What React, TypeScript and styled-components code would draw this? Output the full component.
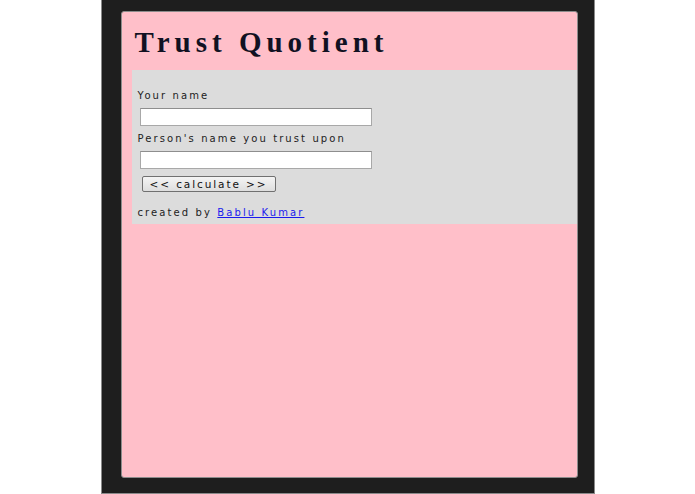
import React from 'react';
import styled, { createGlobalStyle } from 'styled-components';

const GlobalStyle = createGlobalStyle`
  html, body {
    margin: 0;
    padding: 0;
    background: #ffffff;
  }
`;

const Frame = styled.div`
  box-sizing: border-box;
  width: 494px;
  height: 494px;
  margin: 0 auto;
  padding: 11px 16px 15px 19px;
  background: #1e1e1e;
  border: 1px solid #8a8a8a;
  border-top: none;
`;

const Card = styled.div`
  box-sizing: border-box;
  height: 100%;
  background: #ffbfc9;
  border: 1px solid #8c8c8c;
  border-radius: 3px;
  padding-left: 10px;
`;

const Title = styled.h1`
  margin: 0;
  padding: 15px 0 13px 3px;
  font-family: 'Liberation Serif', 'Times New Roman', serif;
  font-weight: bold;
  font-size: 29px;
  line-height: 30px;
  letter-spacing: 5px;
  color: #111122;
`;

const FormPanel = styled.div`
  background: #dcdcdc;
  padding: 20px 0 5px 6px;
  font-family: 'DejaVu Sans', Verdana, sans-serif;
  font-size: 10px;
  letter-spacing: 2.1px;
  color: #222;
`;

const Label = styled.div`
  line-height: 12px;
  margin-bottom: 6px;
`;

const TextInput = styled.input`
  display: block;
  box-sizing: border-box;
  width: 232px;
  height: 18px;
  margin: 0 0 7px 2px;
  border: 1px solid #a8a8a8;
  border-top-color: #8e8e8e;
  background: #fff;
`;

const Button = styled.button`
  display: block;
  box-sizing: border-box;
  width: 134px;
  height: 16px;
  margin: 2px 0 15px 4px;
  padding: 0;
  border: 1px solid #707070;
  border-radius: 2px;
  background: linear-gradient(#f4f4f4, #dedede);
  font-family: 'DejaVu Sans', Verdana, sans-serif;
  font-size: 10.5px;
  letter-spacing: 1.9px;
  line-height: 14px;
  color: #111;
`;

const Credit = styled.div`
  line-height: 12px;
`;

const AuthorLink = styled.a`
  color: #1a1aee;
  text-decoration: underline;
`;

export default function App() {
  return (
    <>
      <GlobalStyle />
      <Frame>
        <Card>
          <Title>Trust Quotient</Title>
          <FormPanel>
            <Label>Your name</Label>
            <TextInput type="text" />
            <Label>Person's name you trust upon</Label>
            <TextInput type="text" />
            <Button type="button">&lt;&lt; calculate &gt;&gt;</Button>
            <Credit>
              created by <AuthorLink href="#">Bablu Kumar</AuthorLink>
            </Credit>
          </FormPanel>
        </Card>
      </Frame>
    </>
  );
}
